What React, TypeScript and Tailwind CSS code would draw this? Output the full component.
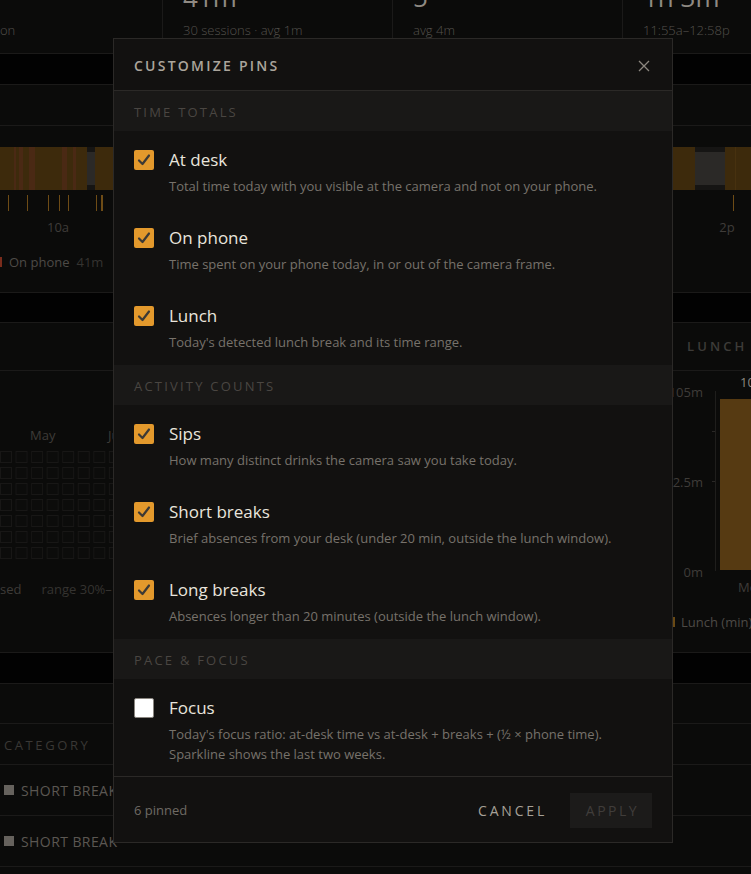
import React from 'react';

type Pin = { label: string; desc: string; checked: boolean };

const sections: { title: string; items: Pin[] }[] = [
  {
    title: 'TIME TOTALS',
    items: [
      { label: 'At desk', desc: 'Total time today with you visible at the camera and not on your phone.', checked: true },
      { label: 'On phone', desc: 'Time spent on your phone today, in or out of the camera frame.', checked: true },
      { label: 'Lunch', desc: "Today's detected lunch break and its time range.", checked: true },
    ],
  },
  {
    title: 'ACTIVITY COUNTS',
    items: [
      { label: 'Sips', desc: 'How many distinct drinks the camera saw you take today.', checked: true },
      { label: 'Short breaks', desc: 'Brief absences from your desk (under 20 min, outside the lunch window).', checked: true },
      { label: 'Long breaks', desc: 'Absences longer than 20 minutes (outside the lunch window).', checked: true },
    ],
  },
  {
    title: 'PACE & FOCUS',
    items: [
      {
        label: 'Focus',
        desc: "Today's focus ratio: at-desk time vs at-desk + breaks + (½ × phone time). Sparkline shows the last two weeks.",
        checked: false,
      },
    ],
  },
];

const stripes: [number, number][] = [
  [14, 2],
  [19, 4],
  [29, 6],
  [62, 5],
  [73, 3],
];
const ticks = [8, 27, 48, 59, 68, 96, 733];

function Checkbox({ on }: { on: boolean }) {
  if (!on) {
    return <span className="mt-[2px] h-5 w-5 shrink-0 rounded-[2px] border border-[#8a8680] bg-white" />;
  }
  return (
    <span className="mt-[2px] flex h-5 w-5 shrink-0 items-center justify-center rounded-[2px] bg-[#e3992c]">
      <svg width="20" height="20" viewBox="0 0 20 20" fill="none">
        <path d="M5 10.5 8.5 14 15 5.5" stroke="#3c3935" strokeWidth="2.2" strokeLinecap="round" strokeLinejoin="round" />
      </svg>
    </span>
  );
}

function Stat({ big, sub, width, last }: { big: string; sub: string; width: string; last?: boolean }) {
  return (
    <div className={`${width} ${last ? '' : 'border-r border-[#1b1a19]'} pl-5`}>
      <div className="-mt-[18px] text-[26px] leading-[30px] text-[#8f8a83]">{big}</div>
      <div className="mt-[9px] text-[13px] font-light leading-[18px] text-[#54514c]">{sub}</div>
    </div>
  );
}

function Modal() {
  return (
    <div className="absolute left-[113px] top-[38px] w-[560px] border border-[#2b2927] bg-[#121110]">
      <div className="flex h-[52px] items-center justify-between border-b border-[#2b2927] pl-5 pr-[22px] pt-[2px]">
        <span className="text-[14px] font-semibold tracking-[0.16em] text-[#aba59c]">CUSTOMIZE PINS</span>
        <svg width="12" height="12" viewBox="0 0 12 12" fill="none">
          <path d="M1 1 11 11M11 1 1 11" stroke="#8c877f" strokeWidth="1.3" />
        </svg>
      </div>
      {sections.map((s) => (
        <div key={s.title}>
          <div className="flex h-10 items-center bg-[#191817] px-5 pt-[3px] text-[13px] tracking-[0.17em] text-[#4a4642]">
            {s.title}
          </div>
          {s.items.map((it) => (
            <div key={it.label} className={`flex gap-[15px] px-5 pt-[17px] ${it.checked ? 'pb-[13px]' : 'pb-[12px]'}`}>
              <Checkbox on={it.checked} />
              <div>
                <div className="text-[17px] leading-6 text-[#e9e5dd]">{it.label}</div>
                <div className="mt-1 text-[13px] leading-5 text-[#77726b]">{it.desc}</div>
              </div>
            </div>
          ))}
        </div>
      ))}
      <div className="flex h-[66px] items-center justify-between border-t border-[#2b2927] px-5 pt-[2px]">
        <span className="text-[13px] text-[#6f6a64]">6 pinned</span>
        <div className="flex items-center gap-[23px]">
          <span className="text-[14px] tracking-[0.2em] text-[#a6a097]">CANCEL</span>
          <span className="flex h-[35px] w-[82px] items-center justify-center bg-[#1c1b1a] pl-[3px] text-[14px] tracking-[0.18em] text-[#403d3a]">
            APPLY
          </span>
        </div>
      </div>
    </div>
  );
}

export default function App() {
  const line = 'border-b border-[#1b1a19]';
  return (
    <div className="relative h-[874px] w-[751px] overflow-hidden bg-[#0b0b0a] font-['Open_Sans',sans-serif]">
      {/* stats row */}
      <div className={`flex h-[54px] ${line}`}>
        <div className="w-[163px] border-r border-[#1b1a19]">
          <div className="mt-[21px] text-[13px] font-light leading-[18px] text-[#54514c]">on</div>
        </div>
        <Stat big="41m" sub="30 sessions · avg 1m" width="w-[230px]" />
        <Stat big="5" sub="avg 4m" width="w-[230px]" />
        <Stat big="1h 3m" sub="11:55a–12:58p" width="flex-1" last />
      </div>
      <div className={`h-[31px] bg-[#020202] ${line}`} />
      <div className={`h-[41px] ${line}`} />

      {/* timeline */}
      <div className={`h-[167px] pt-[21px] ${line}`}>
        <svg width="751" height="90" className="block">
          <rect width="751" height="43" fill="#3d2a0c" />
          {stripes.map(([x, w]) => (
            <rect key={x} x={x} width={w} height="43" fill="#4a2914" />
          ))}
          <rect x="87" width="8" height="43" fill="#161514" />
          <rect x="87" y="5" width="8" height="33" fill="#2b2927" />
          <rect x="695" width="30" height="43" fill="#161514" />
          <rect x="695" y="5" width="30" height="33" fill="#2b2927" />
          <rect x="735" width="1" height="43" fill="#47310f" />
          {ticks.map((x) => (
            <rect key={x} x={x} y="48" width="1" height="16" fill="#6e4c16" />
          ))}
          <rect x="101" y="48" width="2" height="16" fill="#6e4c16" />
          <text x="58" y="84.5" textAnchor="middle" fontSize="13" fill="#3f3c39">10a</text>
          <text x="727" y="84.5" textAnchor="middle" fontSize="13" fill="#3f3c39">2p</text>
        </svg>
        <div className="mt-4 flex items-center gap-[7px] text-[13px] leading-[18px]">
          <span className="h-[10px] w-[2px] bg-[#7a2c1c]" />
          <span className="text-[#4d4a46]">On phone</span>
          <span className="text-[#353330]">41m</span>
        </div>
      </div>
      <div className={`h-[30px] bg-[#020202] ${line}`} />

      {/* heatmap + lunch */}
      <div className={`flex h-[330px] ${line}`}>
        <div className="flex-1">
          <div className={`h-12 ${line}`} />
          <svg width="673" height="200" className="block">
            <text x="30" y="68.5" fontSize="13" fill="#3e3b38">May</text>
            <text x="108" y="68.5" fontSize="13" fill="#3e3b38">Jun</text>
            {Array.from({ length: 7 }).map((_, r) =>
              Array.from({ length: 43 }).map((_, c) => (
                <rect
                  key={`${r}-${c}`}
                  x={c * 15.55 + 0.5}
                  y={80.5 + r * 16}
                  width="11"
                  height="11"
                  fill="#0c0c0b"
                  stroke="#181716"
                />
              ))
            )}
          </svg>
          <div className="mt-[9px] flex gap-[20px] text-[13px] leading-[18px]">
            <span className="text-[#3e3b38]">sed</span>
            <span className="text-[#353330]">range 30%–100%</span>
          </div>
        </div>
        <div className="w-[78px]">
          <div className={`flex h-12 items-center pl-[14px] ${line}`}>
            <span className="text-[13px] font-semibold tracking-[0.24em] text-[#3d3b38]">LUNCH</span>
          </div>
          <svg width="78" height="270" className="block">
            <text x="30" y="25.5" textAnchor="end" fontSize="13" fill="#3f3c39">105m</text>
            <text x="30" y="115.5" textAnchor="end" fontSize="13" fill="#3f3c39">52.5m</text>
            <text x="30" y="205.5" textAnchor="end" fontSize="13" fill="#3f3c39">0m</text>
            <rect x="42" y="20" width="1" height="180" fill="#1f1e1c" />
            <rect x="39" y="60" width="3" height="1" fill="#2a2826" />
            <rect x="39" y="110" width="3" height="1" fill="#2a2826" />
            <rect x="47" y="28" width="31" height="171" fill="#563a12" />
            <text x="67" y="15.5" fontSize="13" fill="#8a867f">105</text>
            <text x="65" y="220.5" fontSize="13" fill="#3f3c39">Mon</text>
            <rect x="0" y="246" width="2" height="10" fill="#6a4a14" />
            <text x="8" y="255.5" fontSize="13" fill="#4d4a46">Lunch (min)</text>
          </svg>
        </div>
      </div>
      <div className={`h-[31px] bg-[#020202] ${line}`} />
      <div className={`h-10 ${line}`} />
      <div className={`flex h-[41px] items-center pl-1 pt-[3px] ${line}`}>
        <span className="text-[13px] tracking-[0.2em] text-[#3a3835]">CATEGORY</span>
      </div>
      {[0, 1].map((i) => (
        <div key={i} className={`flex h-[51px] items-center gap-[7px] pl-1 ${line}`}>
          <span className="h-[10px] w-[10px] bg-[#66625d]" />
          <span className="text-[14px] tracking-[0.03em] text-[#5b5752]">SHORT BREAK</span>
        </div>
      ))}

      <Modal />
    </div>
  );
}
